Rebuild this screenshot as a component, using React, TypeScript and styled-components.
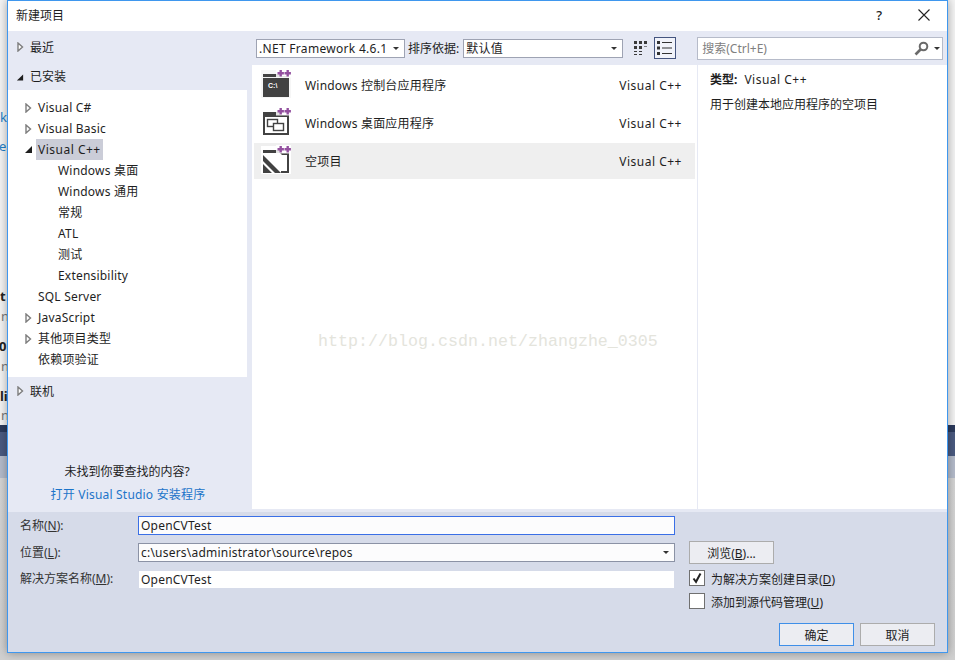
import React from "react";
import styled, { createGlobalStyle } from "styled-components";

const Global = createGlobalStyle`
  html, body { margin: 0; padding: 0; width: 955px; height: 660px; overflow: hidden; }
  * { box-sizing: border-box; }
  body { font-family: "Noto Sans", "Noto Sans CJK SC", sans-serif; font-size: 12px; color: #1e1e1e; }
`;

const Desktop = styled.div`
  position: relative;
  width: 955px;
  height: 660px;
  overflow: hidden;
  background: linear-gradient(#f4f4f4 0, #f4f4f4 425px, #2b3a5c 425px, #2b3a5c 432px, #4a5a80 432px, #4a5a80 456px, #b4bbca 456px, #b4bbca 478px, #d4d4d4 478px, #d0d0d0 100%);
`;

const Scrap = styled.span<{ $x: number; $y: number; $tone: "link" | "bold" | "dim" }>`
  position: absolute;
  left: ${(p) => p.$x}px;
  top: ${(p) => p.$y}px;
  line-height: 16px;
  font-size: 13px;
  font-weight: ${(p) => (p.$tone === "bold" ? 700 : 400)};
  color: ${(p) => (p.$tone === "link" ? "#1e7fc8" : p.$tone === "bold" ? "#222" : "#777")};
`;

const Window = styled.div`
  position: absolute;
  left: 7px;
  top: 0;
  width: 941px;
  height: 653px;
  border: 1px solid #3f97ee;
  background: #e6e9f4;
  box-shadow: 0 0 9px rgba(0, 0, 0, 0.35);
  display: flex;
  flex-direction: column;
`;

const TitleBar = styled.div`
  height: 30px;
  flex: none;
  background: #fff;
  display: flex;
  align-items: center;
  padding: 0 17px 2px 8px;
  font-size: 12px;
`;
const Title = styled.span`
  flex: 1;
`;
const HelpMark = styled.span`
  font-size: 13px;
  font-weight: 500;
  color: #222;
  margin-right: 36px;
`;

const Main = styled.div`
  flex: 1;
  min-height: 0;
  display: flex;
`;

const Sidebar = styled.div`
  width: 244px;
  flex: none;
  display: flex;
  flex-direction: column;
  padding-top: 2px;
`;
const TopItem = styled.div<{ $tall?: boolean }>`
  height: ${(p) => (p.$tall ? 29 : 28)}px;
  flex: none;
  display: flex;
  align-items: ${(p) => (p.$tall ? "flex-end" : "center")};
  padding-left: 8px;
  padding-bottom: ${(p) => (p.$tall ? 5 : 0)}px;
  gap: 6px;
`;
const Arrow = styled.span`
  width: 8px;
  height: 10px;
  flex: none;
  display: flex;
  align-items: center;
  justify-content: center;
`;
const SolidSlot = styled(Arrow)`
  margin-bottom: 3px;
`;
const Tree = styled.div`
  width: 239px;
  flex: none;
  background: #fff;
  padding: 7px 0;
`;
const TreeRow = styled.div<{ $level: number }>`
  height: 21px;
  display: flex;
  align-items: center;
  padding-left: ${(p) => (p.$level === 1 ? 14 : 48)}px;
  letter-spacing: 0.2px;
  white-space: nowrap;
`;
const TreeArrowSlot = styled.span`
  width: 12px;
  flex: none;
  display: flex;
  justify-content: center;
  margin-right: 2px;
`;
const TreeLabel = styled.span<{ $selected?: boolean }>`
  height: 21px;
  line-height: 21px;
  padding: 0 2px;
  letter-spacing: ${(p) => (p.$selected ? 0.5 : 0.2)}px;
  background: ${(p) => (p.$selected ? "#cbcdd8" : "transparent")};
`;
const HelpBox = styled.div`
  margin-top: auto;
  width: 240px;
  padding-bottom: 9px;
  display: flex;
  flex-direction: column;
  align-items: center;
  gap: 7px;
`;
const HelpLine = styled.div`
  line-height: 16px;
  padding-right: 2px;
`;
const HelpLink = styled.a`
  line-height: 16px;
  color: #1c74c9;
  letter-spacing: 0.2px;
`;

const Right = styled.div`
  flex: 1;
  min-width: 0;
  display: flex;
  flex-direction: column;
  padding-bottom: 3px;
`;
const Toolbar = styled.div`
  height: 34px;
  flex: none;
  display: flex;
  align-items: center;
  padding-left: 4px;
`;
const Select = styled.div<{ $w: number }>`
  width: ${(p) => p.$w}px;
  height: 19px;
  flex: none;
  background: #fff;
  border: 1px solid #9ea3b3;
  display: flex;
  align-items: center;
  justify-content: space-between;
  padding: 0 5px 0 2px;
  font-size: 12px;
  letter-spacing: 0.3px;
`;
const Caret = styled.span`
  width: 0;
  height: 0;
  border-left: 3px solid transparent;
  border-right: 3px solid transparent;
  border-top: 3px solid #333;
`;
const SortLabel = styled.span`
  margin: 0 4px 0 3px;
  white-space: nowrap;
`;
const ViewIcon = styled.span`
  display: flex;
  margin-left: 11px;
  width: 14px;
  height: 14px;
`;
const ViewToggle = styled.span`
  width: 22px;
  height: 22px;
  margin-left: 6px;
  flex: none;
  border: 1px solid #45557f;
  background: #f1f3fa;
  display: flex;
  align-items: center;
  justify-content: center;
`;
const SearchBox = styled.div`
  width: 246px;
  height: 23px;
  margin-left: 21px;
  flex: none;
  background: #fff;
  border: 1px solid #b6bbc9;
  display: flex;
  align-items: center;
  padding: 0 2px 0 4px;
  color: #808080;
  gap: 5px;
`;
const SearchText = styled.span`
  flex: 1;
`;

const Content = styled.div`
  flex: 1;
  min-height: 0;
  display: flex;
  background: #fff;
`;
const List = styled.div`
  width: 445px;
  flex: none;
  padding: 2px 2px 0 2px;
`;
const ListItem = styled.div<{ $active?: boolean }>`
  height: 36px;
  margin-bottom: 2px;
  display: flex;
  align-items: center;
  padding: 0 13px 0 7px;
  background: ${(p) => (p.$active ? "#efefef" : "transparent")};
`;
const ItemIcon = styled.span`
  width: 30px;
  height: 30px;
  flex: none;
  margin-right: 14px;
  margin-top: -4px;
`;
const ItemName = styled.span`
  flex: 1;
  letter-spacing: 0.2px;
`;
const ItemKind = styled.span`
  letter-spacing: 0.5px;
`;
const Details = styled.div`
  flex: 1;
  border-left: 1px solid #e6e9f4;
  padding: 7px 12px;
`;
const DetailType = styled.div`
  line-height: 16px;
  letter-spacing: 0.5px;
`;
const DetailKey = styled.b`
  margin-right: 7px;
  font-weight: 700;
  letter-spacing: 0;
`;
const DetailText = styled.div`
  margin-top: 9px;
  line-height: 16px;
`;

const Footer = styled.div`
  height: 140px;
  flex: none;
  background: #d6dbe9;
  display: flex;
  padding: 4px 12px 0;
`;
const Fields = styled.div`
  width: 655px;
  flex: none;
  display: flex;
  flex-direction: column;
`;
const FieldRow = styled.div<{ $gap: number; $raised?: boolean }>`
  display: flex;
  align-items: ${(p) => (p.$raised ? "flex-start" : "center")};
  margin-top: ${(p) => p.$gap}px;
`;
const FieldLabel = styled.label<{ $raised?: boolean }>`
  width: 118px;
  flex: none;
  color: #333;
  white-space: nowrap;
  line-height: ${(p) => (p.$raised ? 16 : 17)}px;
`;
const Field = styled.div<{ $kind: "focus" | "combo" | "plain" }>`
  flex: 1;
  height: ${(p) => (p.$kind === "plain" ? 17 : 19)}px;
  margin-left: ${(p) => (p.$kind === "plain" ? 1 : 0)}px;
  margin-right: ${(p) => (p.$kind === "plain" ? 1 : 0)}px;
  background: ${(p) => (p.$kind === "plain" ? "#fff" : "#fcfcfd")};
  border: ${(p) =>
    p.$kind === "focus" ? "1px solid #3a6fe6" : p.$kind === "combo" ? "1px solid #8b92a5" : "none"};
  padding: 0 5px ${(p) => (p.$kind === "plain" ? 1 : 0)}px 2px;
  letter-spacing: 0.22px;
  display: flex;
  align-items: center;
  justify-content: space-between;
`;
const Side = styled.div`
  width: 246px;
  margin-left: 14px;
  flex: none;
  display: flex;
  flex-direction: column;
  padding-top: 25px;
`;
const Button = styled.div<{ $w: number; $primary?: boolean }>`
  width: ${(p) => p.$w}px;
  height: 23px;
  flex: none;
  background: #ecedf2;
  border: 1px solid ${(p) => (p.$primary ? "#3f8fe8" : "#acacac")};
  display: flex;
  align-items: center;
  justify-content: center;
`;
const CheckRow = styled.div<{ $gap: number }>`
  display: flex;
  align-items: center;
  gap: 6px;
  margin-top: ${(p) => p.$gap}px;
  height: 16px;
`;
const CheckBox = styled.span`
  width: 16px;
  height: 16px;
  flex: none;
  border: 1px solid #707070;
  background: #fff;
  display: flex;
  align-items: center;
  justify-content: center;
`;
const CheckLabel = styled.span`
  padding-top: 4px;
  line-height: 16px;
`;
const Actions = styled.div`
  display: flex;
  justify-content: flex-end;
  gap: 6px;
  margin-top: 14px;
`;

const Watermark = styled.div`
  position: absolute;
  left: 318px;
  top: 332px;
  font-family: "Liberation Mono", monospace;
  font-size: 16.67px;
  line-height: 20px;
  color: #e4e4dc;
  white-space: nowrap;
  pointer-events: none;
`;

const Hollow = () => (
  <svg width="7" height="10" viewBox="0 0 7 10">
    <path d="M1 1 L5.5 5 L1 9 Z" fill="#fff" stroke="#7d7d7d" strokeWidth="1.4" />
  </svg>
);
const Solid = () => (
  <svg width="9" height="9" viewBox="0 0 9 9">
    <path d="M8 1 V8 H1 Z" fill="#1e1e1e" />
  </svg>
);

const Plus = () => (
  <path d="M16.5 4h2V2h2.4v2h2v2.4h-2v2h-2.4v-2h-2z M23.5 4h2V2h2.4v2h2v2.4h-2v2h-2.4v-2h-2z" fill="#93509f" />
);

const Frame = ({ children }: { children: React.ReactNode }) => (
  <svg width="30" height="30" viewBox="0 0 30 30">
    {children}
    <rect x="15" y="1" width="15" height="8.5" fill="#fff" opacity="0.85" />
    <Plus />
  </svg>
);

const ConsoleIcon = () => (
  <Frame>
    <rect x="0" y="2" width="30" height="28" fill="#f6f6f6" />
    <path d="M2 6h17v2h9v21H2z" fill="#424242" />
    <rect x="2" y="9" width="26" height="1" fill="#f0f0f0" />
    <text x="7" y="20" fontSize="7" fontWeight="700" fill="#fff" fontFamily="Liberation Sans, sans-serif">
      C:\
    </text>
  </Frame>
);
const DesktopIcon = () => (
  <Frame>
    <path d="M2 6h17v3h9v20H2zM4 11v16h22V11z" fill="#424242" fillRule="evenodd" />
    <rect x="6.5" y="13.5" width="10" height="7" fill="none" stroke="#424242" strokeWidth="1.4" />
    <rect x="12.5" y="17.5" width="10" height="7" fill="#fff" stroke="#424242" strokeWidth="1.4" />
  </Frame>
);
const EmptyIcon = () => (
  <Frame>
    <rect x="0" y="2" width="30" height="28" fill="#fff" />
    <path d="M2 6h17v3h9v20H20v-2h6V11h-5L19 9H2zM2 11l18 18h-6L2 17zM2 20l9 9H2z" fill="#424242" fillRule="evenodd" />
  </Frame>
);

const GridIcon = () => (
  <svg width="14" height="14" viewBox="0 0 14 14" fill="#3a3a3a">
    <path d="M0 0h3v3H0zM5 0h3v3H5zM10 0h3v3h-3zM0 5h3v3H0zM5 5h3v3H5zM0 10h3v1H0zM5 10h3v1H5zM0 13h3v1H0zM5 13h3v1H5z" />
    <path d="M10 5h3v1h-3z" opacity="0.6" />
  </svg>
);
const ListIcon = () => (
  <svg width="16" height="16" viewBox="0 0 16 16" fill="#333">
    <path d="M0 1h3v3H0zM0 6.5h3v3H0zM0 12h3v3H0zM5 2h10v1H5zM5 7.5h10v1H5zM5 13h10v1H5z" />
  </svg>
);
const SearchIcon = () => (
  <svg width="15" height="15" viewBox="0 0 15 15">
    <circle cx="9.5" cy="5.5" r="3.8" fill="none" stroke="#6a6a6a" strokeWidth="2" />
    <path d="M6.5 8.5 L1.5 13.5" stroke="#6a6a6a" strokeWidth="2.6" />
  </svg>
);
const CloseIcon = () => (
  <svg width="12" height="12" viewBox="0 0 12 12">
    <path d="M0.5 0.5 L11.5 11.5 M11.5 0.5 L0.5 11.5" stroke="#222" strokeWidth="1.1" />
  </svg>
);
const CheckIcon = () => (
  <svg width="12" height="12" viewBox="0 0 12 12">
    <path d="M2.5 6.5 L5 9.8 L9.5 1.5" fill="none" stroke="#222" strokeWidth="2" />
  </svg>
);

const tree = [
  { label: "Visual C#", level: 1, arrow: "hollow" },
  { label: "Visual Basic", level: 1, arrow: "hollow" },
  { label: "Visual C++", level: 1, arrow: "solid", selected: true },
  { label: "Windows 桌面", level: 2 },
  { label: "Windows 通用", level: 2 },
  { label: "常规", level: 2 },
  { label: "ATL", level: 2 },
  { label: "测试", level: 2 },
  { label: "Extensibility", level: 2 },
  { label: "SQL Server", level: 1 },
  { label: "JavaScript", level: 1, arrow: "hollow" },
  { label: "其他项目类型", level: 1, arrow: "hollow" },
  { label: "依赖项验证", level: 1 },
];

const scraps: { x: number; y: number; tone: "link" | "bold" | "dim"; text: string }[] = [
  { x: 0, y: 109, tone: "link", text: "k" },
  { x: -1, y: 138, tone: "link", text: "ea" },
  { x: 0, y: 288, tone: "bold", text: "t" },
  { x: 1, y: 308, tone: "dim", text: "n" },
  { x: -1, y: 338, tone: "bold", text: "0" },
  { x: 1, y: 358, tone: "dim", text: "n" },
  { x: 0, y: 388, tone: "bold", text: "li" },
  { x: 1, y: 407, tone: "dim", text: "n" },
];

export default function App() {
  return (
    <Desktop>
      <Global />
      {scraps.map((s, i) => (
        <Scrap key={i} $x={s.x} $y={s.y} $tone={s.tone}>
          {s.text}
        </Scrap>
      ))}
      <Window>
        <TitleBar>
          <Title>新建项目</Title>
          <HelpMark>?</HelpMark>
          <CloseIcon />
        </TitleBar>
        <Main>
          <Sidebar>
            <TopItem>
              <Arrow>
                <Hollow />
              </Arrow>
              <span>最近</span>
            </TopItem>
            <TopItem $tall>
              <SolidSlot>
                <Solid />
              </SolidSlot>
              <span>已安装</span>
            </TopItem>
            <Tree>
              {tree.map((r) => (
                <TreeRow key={r.label} $level={r.level}>
                  {r.level === 1 && (
                    <TreeArrowSlot>
                      {r.arrow === "hollow" && <Hollow />}
                      {r.arrow === "solid" && <Solid />}
                    </TreeArrowSlot>
                  )}
                  <TreeLabel $selected={r.selected}>{r.label}</TreeLabel>
                </TreeRow>
              ))}
            </Tree>
            <TopItem>
              <Arrow>
                <Hollow />
              </Arrow>
              <span>联机</span>
            </TopItem>
            <HelpBox>
              <HelpLine>未找到你要查找的内容?</HelpLine>
              <HelpLink>打开 Visual Studio 安装程序</HelpLink>
            </HelpBox>
          </Sidebar>
          <Right>
            <Toolbar>
              <Select $w={149}>
                <span>.NET Framework 4.6.1</span>
                <Caret />
              </Select>
              <SortLabel>排序依据:</SortLabel>
              <Select $w={160}>
                <span>默认值</span>
                <Caret />
              </Select>
              <ViewIcon>
                <GridIcon />
              </ViewIcon>
              <ViewToggle>
                <ListIcon />
              </ViewToggle>
              <SearchBox>
                <SearchText>搜索(Ctrl+E)</SearchText>
                <SearchIcon />
                <Caret />
              </SearchBox>
            </Toolbar>
            <Content>
              <List>
                <ListItem>
                  <ItemIcon>
                    <ConsoleIcon />
                  </ItemIcon>
                  <ItemName>Windows 控制台应用程序</ItemName>
                  <ItemKind>Visual C++</ItemKind>
                </ListItem>
                <ListItem>
                  <ItemIcon>
                    <DesktopIcon />
                  </ItemIcon>
                  <ItemName>Windows 桌面应用程序</ItemName>
                  <ItemKind>Visual C++</ItemKind>
                </ListItem>
                <ListItem $active>
                  <ItemIcon>
                    <EmptyIcon />
                  </ItemIcon>
                  <ItemName>空项目</ItemName>
                  <ItemKind>Visual C++</ItemKind>
                </ListItem>
              </List>
              <Details>
                <DetailType>
                  <DetailKey>类型:</DetailKey>Visual C++
                </DetailType>
                <DetailText>用于创建本地应用程序的空项目</DetailText>
              </Details>
            </Content>
          </Right>
        </Main>
        <Footer>
          <Fields>
            <FieldRow $gap={0}>
              <FieldLabel>
                名称(<u>N</u>):
              </FieldLabel>
              <Field $kind="focus">OpenCVTest</Field>
            </FieldRow>
            <FieldRow $gap={8}>
              <FieldLabel>
                位置(<u>L</u>):
              </FieldLabel>
              <Field $kind="combo">
                <span>c:\users\administrator\source\repos</span>
                <Caret />
              </Field>
            </FieldRow>
            <FieldRow $gap={9} $raised>
              <FieldLabel $raised>
                解决方案名称(<u>M</u>):
              </FieldLabel>
              <Field $kind="plain">OpenCVTest</Field>
            </FieldRow>
          </Fields>
          <Side>
            <Button $w={85}>
              <span>
                浏览(<u>B</u>)...
              </span>
            </Button>
            <CheckRow $gap={6}>
              <CheckBox>
                <CheckIcon />
              </CheckBox>
              <CheckLabel>
                为解决方案创建目录(<u>D</u>)
              </CheckLabel>
            </CheckRow>
            <CheckRow $gap={7}>
              <CheckBox />
              <CheckLabel>
                添加到源代码管理(<u>U</u>)
              </CheckLabel>
            </CheckRow>
            <Actions>
              <Button $w={75} $primary>
                确定
              </Button>
              <Button $w={75}>取消</Button>
            </Actions>
          </Side>
        </Footer>
      </Window>
      <Watermark>http://blog.csdn.net/zhangzhe_0305</Watermark>
    </Desktop>
  );
}
